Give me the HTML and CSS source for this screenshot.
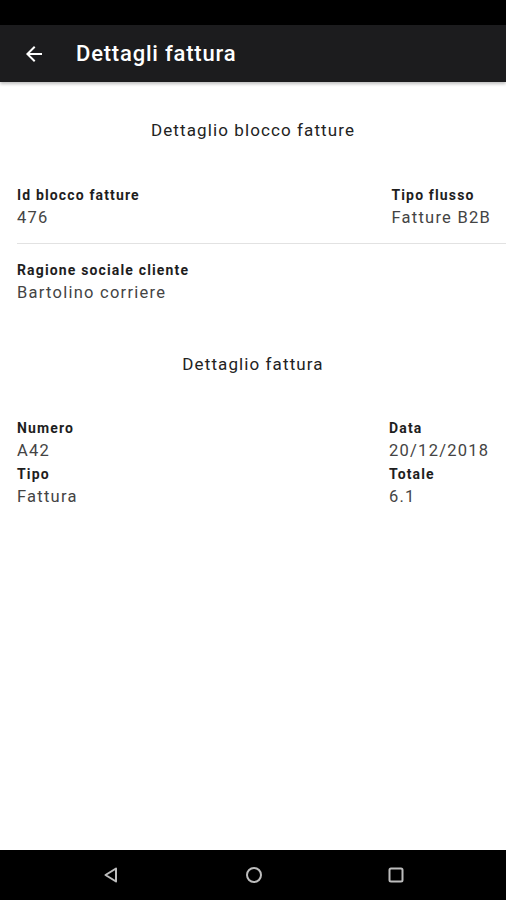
FILE: index.html
```html
<!DOCTYPE html>
<html lang="it">
<head>
<meta charset="utf-8">
<link rel="stylesheet" href="styles.css">
</head>
<body>
<div class="screen">
  <div class="statusbar"></div>
  <header class="toolbar">
    <svg class="back" width="24" height="24" viewBox="0 0 24 24"><path d="M20 11H7.83l5.59-5.59L12 4l-8 8 8 8 1.41-1.41L7.83 13H20v-2z" fill="#fff"/></svg>
    <h1 class="title">Dettagli fattura</h1>
  </header>
  <main class="content">
    <h2 class="section-title first">Dettaglio blocco fatture</h2>
    <div class="row">
      <div class="field">
        <div class="label">Id blocco fatture</div>
        <div class="value">476</div>
      </div>
      <div class="field">
        <div class="label">Tipo flusso</div>
        <div class="value">Fatture B2B</div>
      </div>
    </div>
    <div class="divider"></div>
    <div class="field single">
      <div class="label">Ragione sociale cliente</div>
      <div class="value">Bartolino corriere</div>
    </div>
    <h2 class="section-title second">Dettaglio fattura</h2>
    <div class="grid">
      <div class="field">
        <div class="label">Numero</div>
        <div class="value">A42</div>
      </div>
      <div class="field">
        <div class="label">Data</div>
        <div class="value">20/12/2018</div>
      </div>
      <div class="field">
        <div class="label">Tipo</div>
        <div class="value">Fattura</div>
      </div>
      <div class="field">
        <div class="label">Totale</div>
        <div class="value">6.1</div>
      </div>
    </div>
  </main>
  <nav class="navbar">
    <svg width="20" height="20" viewBox="0 0 20 20"><path d="M15 3.5 L4.5 10 L15 16.5 Z" fill="none" stroke="#bdbdbd" stroke-width="2" stroke-linejoin="round"/></svg>
    <svg width="20" height="20" viewBox="0 0 20 20"><circle cx="10" cy="10" r="7" fill="none" stroke="#bdbdbd" stroke-width="2"/></svg>
    <svg width="20" height="20" viewBox="0 0 20 20"><rect x="3.5" y="3.5" width="13" height="13" rx="1.5" fill="none" stroke="#bdbdbd" stroke-width="2"/></svg>
  </nav>
</div>
</body>
</html>
```
FILE: styles.css
```css
* { box-sizing: border-box; margin: 0; padding: 0; }
html, body { width: 506px; height: 900px; background: #fff; }
body { font-family: Roboto, "Noto Sans", "Liberation Sans", sans-serif; overflow: hidden; }
.screen { display: flex; flex-direction: column; height: 900px; }
.statusbar { height: 25px; background: #000; flex: none; }
.toolbar {
  height: 57px; flex: none; background: #1c1c1e;
  display: flex; align-items: center; padding-left: 22px;
  box-shadow: 0 2px 3px rgba(0,0,0,0.25);
  position: relative; z-index: 1;
}
.back { flex: none; }
.title { color: #fff; font-size: 22px; font-weight: 500; margin-left: 30px; letter-spacing: 0.8px; }
.content { flex: 1; padding: 0 0 0 17px; }
.section-title { font-size: 17px; line-height: 20px; font-weight: 400; color: #222; text-align: center; padding-right: 17px; letter-spacing: 1.1px; }
.section-title.first { margin-top: 38px; }
.section-title.second { margin-top: 49px; }
.row { display: flex; justify-content: space-between; margin-top: 44px; padding-right: 15px; }
.label { font-size: 14px; font-weight: 700; color: #1e1e1e; line-height: 22px; letter-spacing: 1.15px; }
.value { font-size: 16.5px; color: #444; line-height: 24px; letter-spacing: 1.25px; }
.divider { height: 1px; background: #e2e2e2; margin-top: 13px; }
.single { margin-top: 15px; }
.grid {
  display: grid; grid-template-columns: 372px auto;
  margin-top: 43px;
}
.navbar {
  height: 50px; flex: none; background: #000;
  display: flex; align-items: center; justify-content: space-between;
  padding: 0 100px 0 101px;
}
```
